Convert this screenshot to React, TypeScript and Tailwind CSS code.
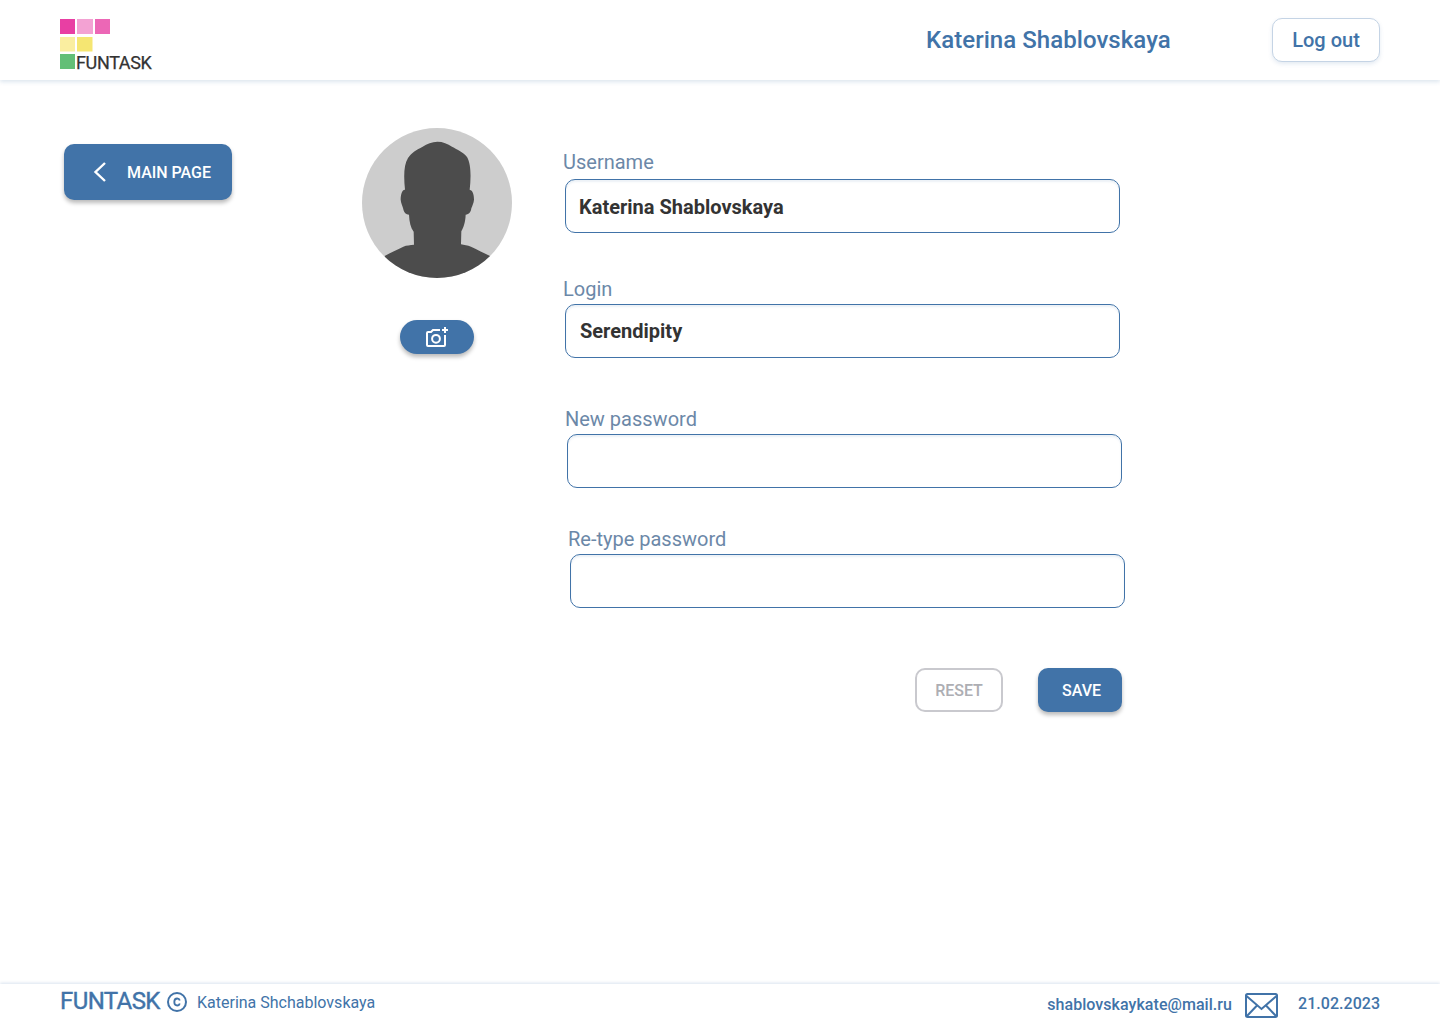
import type { ReactNode } from 'react';

function Logo() {
  return (
    <div className="relative h-[51px] w-[94px]">
      <svg width="51" height="51" viewBox="0 0 51 51" className="block">
        <rect x="0" y="0" width="15" height="15" fill="#e83fa3" />
        <rect x="17" y="0" width="16" height="15" fill="#f3a2d3" />
        <rect x="35" y="0" width="15" height="15" fill="#ec67b6" />
        <rect x="0" y="18" width="15" height="14.5" fill="#faeea0" />
        <rect x="17" y="18" width="15.500" height="14.5" fill="#f5e672" />
        <rect x="0" y="35" width="15" height="15" fill="#63bf77" />
      </svg>
      <span className="absolute top-[34px] left-4 font-[Roboto] text-[18px] leading-[20px] tracking-[-0.35px] text-[#333] [-webkit-text-stroke:0.25px_#333]">
        FUNTASK
      </span>
    </div>
  );
}

type FieldProps = { label: string; value?: string; className: string; inputClass?: string };

function Field({ label, value, className, inputClass = '' }: FieldProps) {
  return (
    <label className={`block w-[557px] ${className}`}>
      <span className="block h-[27px] text-xl leading-[23px] whitespace-nowrap text-[#6c88a8]">{label}</span>
      <input
        type="text"
        defaultValue={value}
        className={`ml-0.5 block h-[54px] w-[555px] rounded-[10px] border border-[#4173a8] bg-white text-xl font-bold text-[#333] shadow-[inset_0_2px_2px_rgba(65,115,168,0.1)] outline-none ${inputClass}`}
      />
    </label>
  );
}

function PrimaryButton({ className, children }: { className: string; children: ReactNode }) {
  return (
    <button
      className={`flex items-center bg-[#4173a8] font-medium text-white shadow-[0_3px_4px_rgba(0,0,0,0.27)] ${className}`}
    >
      {children}
    </button>
  );
}

function Avatar() {
  return (
    <svg width="150" height="150" viewBox="36 24 450 450" className="block">
      <defs>
        <clipPath id="avatar-circle">
          <circle cx="261" cy="249" r="225" />
        </clipPath>
      </defs>
      <g clipPath="url(#avatar-circle)">
        <rect x="36" y="24" width="450" height="450" fill="#cdcdcd" />
        <path
          fill="#4c4c4c"
          d="M262 65C246 65 231 72 218 80C200 89 184 98 174 114C161 135 161 170 165 209C157 208 152 223 152 239C153 249 157 257 159 264C162 279 168 284 177 284C178 306 182 323 191 335L192 374C180 376 170 375 160 380C139 390 120 399 104 408V480H420V408C402 399 382 389 363 380C353 375 342 376 333 373L334 334C341 321 346 307 347 284C357 284 363 276 364 265C367 257 371 249 372 239C372 223 368 211 359 209C363 174 364 133 351 111C340 96 322 89 306 80C293 71 279 65 262 65Z"
        />
      </g>
    </svg>
  );
}

function CameraIcon() {
  return (
    <svg width="24" height="24" viewBox="0 0 24 24" fill="none" stroke="#fff" strokeWidth="2" className="block">
      <path d="M15 5H8L6 7H3Q2 7 2 8V20Q2 21 3 21H19Q20 21 20 20V10" />
      <circle cx="11" cy="13.800" r="3.900" />
      <path d="M20 2V8M17 5H23" />
    </svg>
  );
}

export default function App() {
  return (
    <div className="flex h-[1024px] w-[1440px] flex-col overflow-hidden bg-white font-[Roboto,sans-serif]">
      <header className="flex h-20 shrink-0 items-start bg-white pr-[60px] pl-[60px] shadow-[0_2px_4px_rgba(65,115,168,0.18)]">
        <div className="pt-[19px]">
          <Logo />
        </div>
        <span className="mt-[26px] ml-auto w-[346px] text-2xl leading-[28px] font-medium tracking-[0.05px] whitespace-nowrap text-[#4173a8]">
          Katerina Shablovskaya
        </span>
        <button className="mt-[18px] h-11 w-[108px] rounded-[10px] border border-[#c5d4e5] bg-white text-xl font-medium text-[#4173a8] shadow-[0_2px_4px_rgba(65,115,168,0.15)]">
          Log out
        </button>
      </header>

      <main className="flex grow items-start">
        <PrimaryButton className="mt-16 ml-16 h-14 w-[168px] rounded-[10px] text-base">
          <svg width="14" height="22" viewBox="0 0 14 22" fill="none" className="ml-[29px]">
            <path d="M12 2L2.500 11L12 20" stroke="#fff" strokeWidth="2.400" />
          </svg>
          <span className="ml-5 pt-px whitespace-nowrap">MAIN PAGE</span>
        </PrimaryButton>

        <div className="mt-12 ml-[130px] flex w-[150px] flex-col items-center">
          <Avatar />
          <PrimaryButton className="mt-[42px] h-[34px] w-[74px] justify-center rounded-full">
            <CameraIcon />
          </PrimaryButton>
        </div>

        <form className="mt-[71px] ml-[51px] w-[562px]">
          <Field label="Username" value="Katerina Shablovskaya" className="h-[127px]" inputClass="mt-px pt-0.5 pl-[13px]" />
          <Field label="Login" value="Serendipity" className="h-[130px]" inputClass="-mt-px pl-[14px]" />
          <Field label="New password" className="ml-0.5 h-[120px]" inputClass="-mt-px" />
          <Field label="Re-type password" className="ml-[5px] h-[140px]" inputClass="-mt-px" />
          <div className="ml-[352px] flex gap-[35px]">
            <button
              type="reset"
              className="h-11 w-[88px] rounded-[10px] border-2 border-[#c9c9ce] bg-white pt-px text-base font-medium text-[#adaeb3]"
            >
              RESET
            </button>
            <PrimaryButton className="h-11 w-[84px] justify-center rounded-[10px] pt-px pl-[3px] text-base">SAVE</PrimaryButton>
          </div>
        </form>
      </main>

      <footer className="flex h-10 shrink-0 items-start bg-white px-[60px] text-[#4173a8] shadow-[0_-1px_3px_rgba(65,115,168,0.2)]">
        <span className="mt-1 w-[106px] text-2xl leading-[26px] tracking-[-0.6px] [-webkit-text-stroke:0.4px_#4173a8]">
          FUNTASK
        </span>
        <svg width="22" height="22" viewBox="0 0 22 22" fill="none" stroke="#4173a8" strokeWidth="2" className="mt-[7px]">
          <circle cx="11" cy="11" r="9" />
          <path d="M13.800 9.500C13.400 8 12.400 7.500 11.200 7.500C9.400 7.500 8.300 8.900 8.300 11C8.300 13.100 9.400 14.500 11.200 14.500C12.400 14.500 13.400 14 13.800 12.500" strokeWidth="1.800" />
        </svg>
        <span className="mt-[9px] ml-[9px] text-base leading-[19px]">Katerina Shchablovskaya</span>
        <span className="mt-[11px] mr-[13px] ml-auto text-base leading-[19px] font-medium tracking-[0.05px]">
          shablovskaykate@mail.ru
        </span>
        <svg width="34" height="26" viewBox="0 0 34 26" fill="none" stroke="#4173a8" strokeWidth="2" className="mt-2">
          <rect x="1" y="2" width="31" height="23" rx="1.500" />
          <path d="M1.500 4L16.500 17L31.500 4M1.500 24.500L12 13.500M31.500 24.500L21 13.500" />
        </svg>
        <span className="mt-[10px] ml-[19px] w-[82px] text-base leading-[19px] font-medium tracking-[0.05px] whitespace-nowrap">
          21.02.2023
        </span>
      </footer>
    </div>
  );
}
